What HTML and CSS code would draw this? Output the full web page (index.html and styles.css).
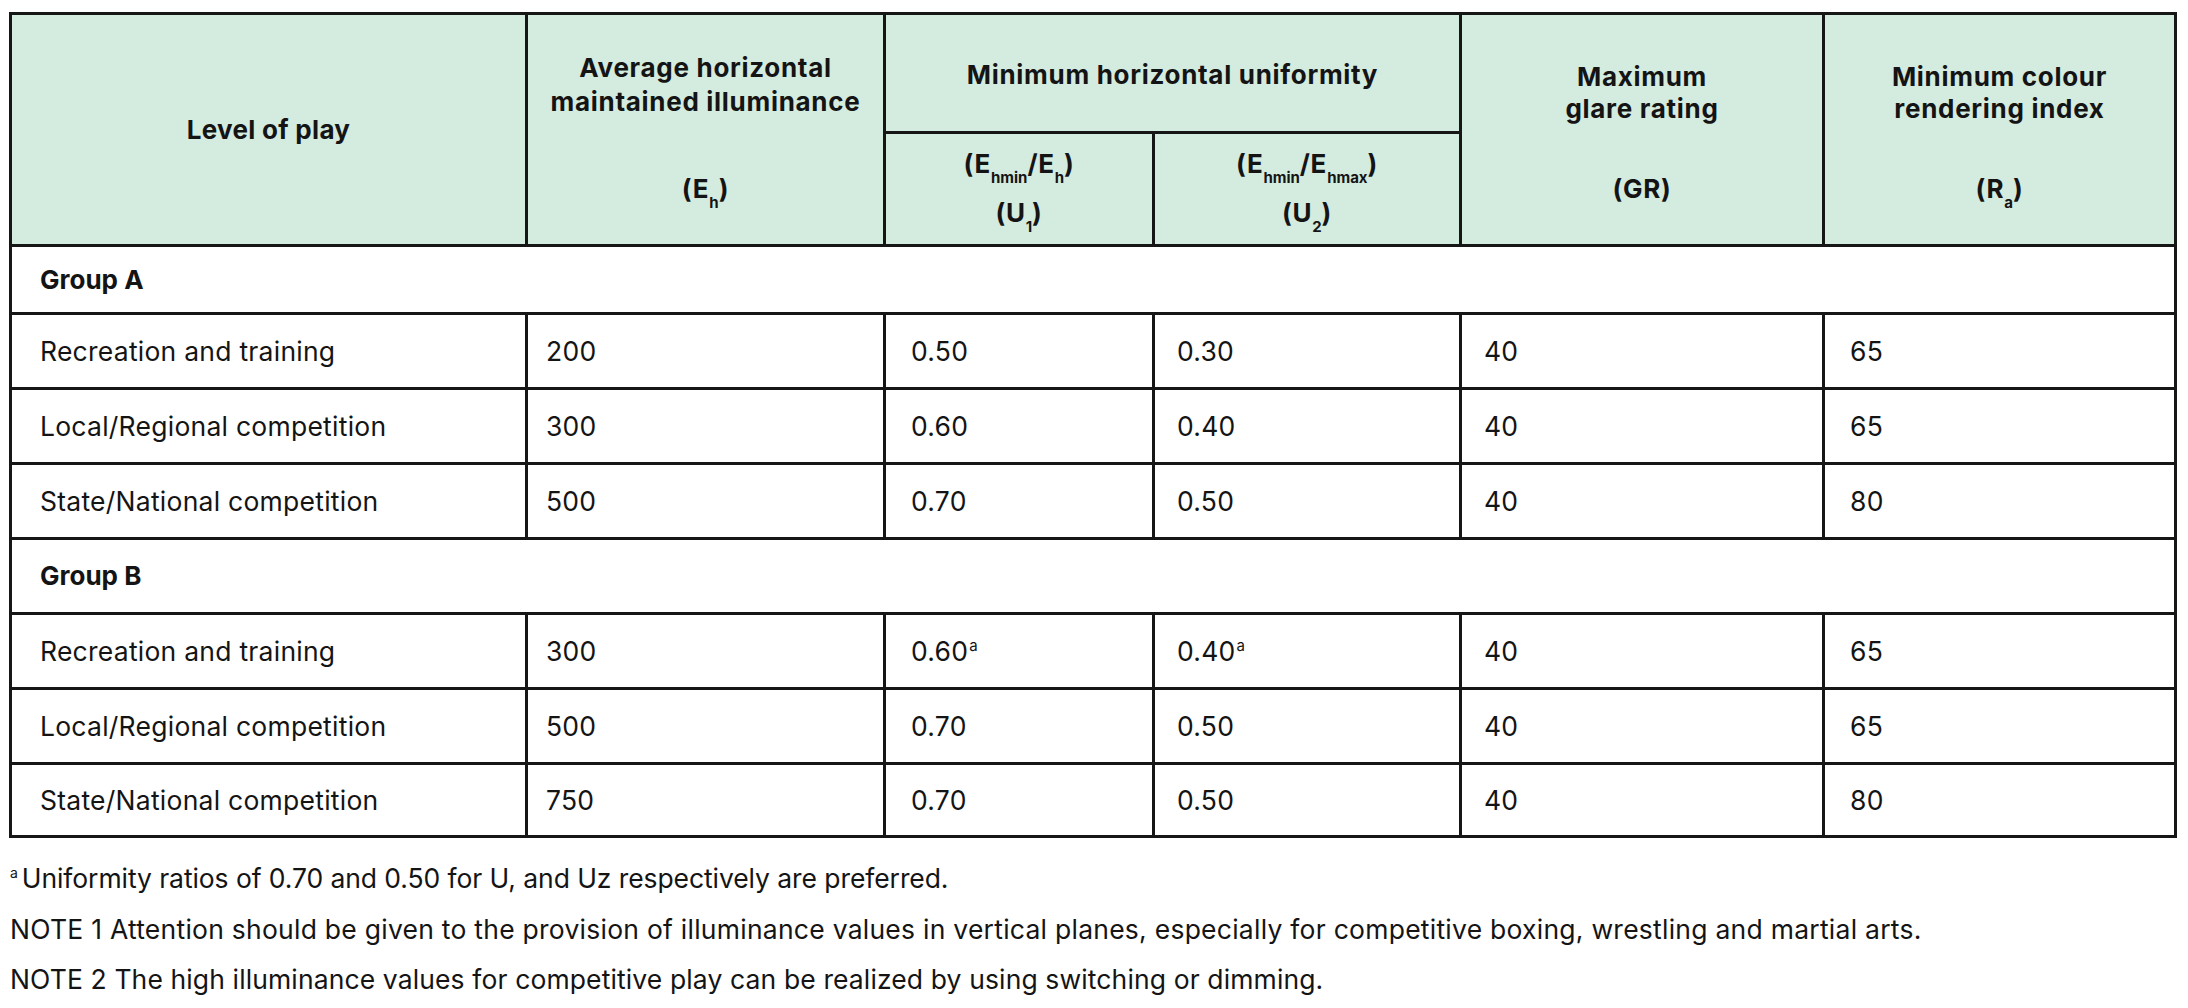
FILE: index.html
```html
<!DOCTYPE html>
<html lang="en">
<head>
<meta charset="utf-8">
<title>Lighting requirements</title>
<link rel="stylesheet" href="styles.css">
</head>
<body>
<div class="page">
  <table class="spec">
    <colgroup>
      <col class="c-level">
      <col class="c-avg">
      <col class="c-u1">
      <col class="c-u2">
      <col class="c-gr">
      <col class="c-ra">
    </colgroup>
    <thead>
      <tr class="hrow-top">
        <th rowspan="2" class="h-level">Level of play</th>
        <th rowspan="2" class="h-stack h-avg">
          <div class="h-title">Average horizontal<br>maintained illuminance</div>
          <div class="h-sym">(E<sub>h</sub>)</div>
        </th>
        <th colspan="2" class="h-group">Minimum horizontal uniformity</th>
        <th rowspan="2" class="h-stack h-side">
          <div class="h-title">Maximum<br>glare rating</div>
          <div class="h-sym">(GR)</div>
        </th>
        <th rowspan="2" class="h-stack h-side">
          <div class="h-title">Minimum colour<br>rendering index</div>
          <div class="h-sym">(R<sub>a</sub>)</div>
        </th>
      </tr>
      <tr class="hrow-sub">
        <th class="h-sub">
          <div class="h-ratio">(E<sub>hmin</sub>/E<sub>h</sub>)</div>
          <div class="h-u">(U<sub>1</sub>)</div>
        </th>
        <th class="h-sub">
          <div class="h-ratio">(E<sub>hmin</sub>/E<sub>hmax</sub>)</div>
          <div class="h-u">(U<sub>2</sub>)</div>
        </th>
      </tr>
    </thead>
    <tbody>
      <tr class="group group-a"><td colspan="6">Group A</td></tr>
      <tr class="row"><td>Recreation and training</td><td>200</td><td>0.50</td><td>0.30</td><td>40</td><td>65</td></tr>
      <tr class="row"><td>Local/Regional competition</td><td>300</td><td>0.60</td><td>0.40</td><td>40</td><td>65</td></tr>
      <tr class="row"><td>State/National competition</td><td>500</td><td>0.70</td><td>0.50</td><td>40</td><td>80</td></tr>
      <tr class="group group-b"><td colspan="6">Group B</td></tr>
      <tr class="row"><td>Recreation and training</td><td>300</td><td>0.60<sup>a</sup></td><td>0.40<sup>a</sup></td><td>40</td><td>65</td></tr>
      <tr class="row"><td>Local/Regional competition</td><td>500</td><td>0.70</td><td>0.50</td><td>40</td><td>65</td></tr>
      <tr class="row row-last"><td>State/National competition</td><td>750</td><td>0.70</td><td>0.50</td><td>40</td><td>80</td></tr>
    </tbody>
  </table>
  <div class="notes">
    <p class="note-a"><sup>a</sup>Uniformity ratios of 0.70 and 0.50 for U, and Uz respectively are preferred.</p>
    <p class="note-1">NOTE 1 Attention should be given to the provision of illuminance values in vertical planes, especially for competitive boxing, wrestling and martial arts.</p>
    <p class="note-2">NOTE 2 The high illuminance values for competitive play can be realized by using switching or dimming.</p>
  </div>
</div>
</body>
</html>
```

FILE: styles.css
```css
html, body {
  margin: 0;
  padding: 0;
  background: #ffffff;
}

body {
  font-family: Inter, "Noto Sans", "Liberation Sans", sans-serif;
  color: #141414;
}

.page {
  padding: 12px 0 0 9px;
}

.spec {
  border-collapse: collapse;
  table-layout: fixed;
  width: 2168px;
}

.c-level { width: 516px; }
.c-avg { width: 358px; }
.c-u1 { width: 269px; }
.c-u2 { width: 307px; }
.c-gr { width: 363px; }
.c-ra { width: 352px; }

.spec th,
.spec td {
  border: 3px solid #161616;
  padding: 0;
}

/* ---------- header ---------- */
.spec thead th {
  background: #d4ebdf;
  font-size: 26px;
  font-weight: 700;
  letter-spacing: 0.7px;
  line-height: 34px;
  text-align: center;
}

.hrow-top { height: 119px; }
.hrow-sub { height: 113px; }

.spec .h-level,
.spec .h-group {
  vertical-align: middle;
}

.spec .h-level {
  letter-spacing: 0.3px;
}

.spec .h-group {
  padding-top: 4px;
}

.spec .h-stack {
  vertical-align: top;
}

.spec .h-avg { padding-top: 36px; }
.spec .h-avg .h-sym { margin-top: 53px; }

.spec .h-side { padding-top: 46px; }
.spec .h-side .h-title { line-height: 32px; }
.spec .h-side .h-sym { margin-top: 47px; }

.spec .h-sub {
  vertical-align: top;
  padding-top: 13px;
}

.spec .h-sub .h-u { margin-top: 15px; }

.spec sub {
  font-size: 15px;
  letter-spacing: 0;
  line-height: 0;
  vertical-align: -10px;
}

/* ---------- body ---------- */
.spec tbody td {
  font-size: 26.5px;
  font-weight: 400;
  letter-spacing: 0.25px;
  line-height: 32px;
  vertical-align: middle;
  padding-left: 23px;
}

.spec tbody td:nth-child(1) { padding-left: 28px; }
.spec tbody td:nth-child(2) { padding-left: 18px; }
.spec tbody td:nth-child(3) { padding-left: 25px; }
.spec tbody td:nth-child(4) { padding-left: 22px; }
.spec tbody td:nth-child(5) { padding-left: 22px; }
.spec tbody td:nth-child(6) { padding-left: 25px; }

.row { height: 75px; }
.row-last { height: 73px; }

.spec tbody .group td {
  font-weight: 700;
  font-size: 26px;
  letter-spacing: 0;
  padding-left: 28px;
}

.group-a { height: 68px; }
.group-b { height: 75px; }

.spec sup {
  font-size: 15px;
  letter-spacing: 0;
  line-height: 0;
  vertical-align: 10px;
  margin-left: 1px;
}

/* ---------- notes ---------- */
.notes {
  margin-top: 15px;
  padding-left: 1px;
}

.notes p {
  margin: 0;
  font-size: 26.5px;
  letter-spacing: 0.25px;
  line-height: 50.7px;
}

.notes .note-a { letter-spacing: -0.08px; }
.notes .note-2 { letter-spacing: 0.12px; }

.notes sup {
  font-size: 14px;
  line-height: 0;
  vertical-align: 10px;
  margin-right: 4px;
}
```
